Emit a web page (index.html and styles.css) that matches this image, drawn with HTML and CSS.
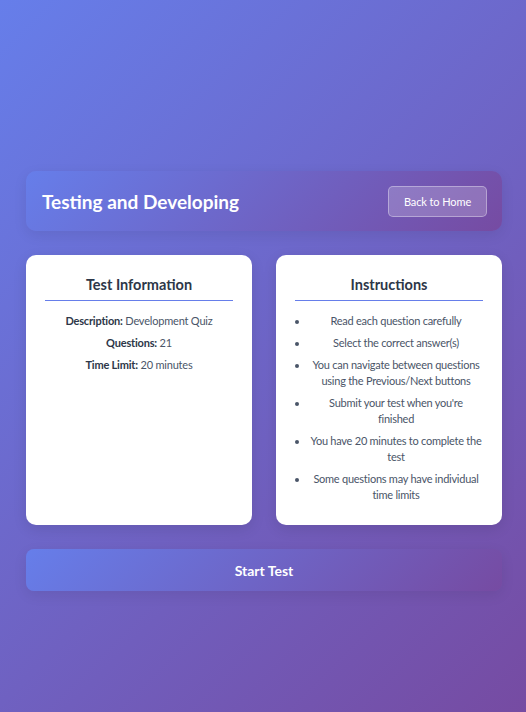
FILE: index.html
```html
<!DOCTYPE html>
<html lang="en">
<head>
<meta charset="utf-8">
<title>Testing and Developing</title>
<link rel="stylesheet" href="styles.css">
</head>
<body>
<main class="page">
  <header class="test-header">
    <h1 class="test-title">Testing and Developing</h1>
    <button class="back-btn" type="button">Back to Home</button>
  </header>
  <section class="cards">
    <div class="card">
      <h2 class="card-title">Test Information</h2>
      <p class="info"><strong>Description:</strong> Development Quiz</p>
      <p class="info"><strong>Questions:</strong> 21</p>
      <p class="info"><strong>Time Limit:</strong> 20 minutes</p>
    </div>
    <div class="card">
      <h2 class="card-title">Instructions</h2>
      <ul class="instructions">
        <li>Read each question carefully</li>
        <li>Select the correct answer(s)</li>
        <li>You can navigate between questions using the Previous/Next buttons</li>
        <li>Submit your test when you're<br>finished</li>
        <li>You have 20 minutes to complete the test</li>
        <li>Some questions may have individual time limits</li>
      </ul>
    </div>
  </section>
  <button class="start-btn" type="button">Start Test</button>
</main>
</body>
</html>
```
FILE: styles.css
```css
* { box-sizing: border-box; }
html, body { margin: 0; height: 100%; }
body {
  font-family: Lato, "Noto Sans", sans-serif;
  background: linear-gradient(135deg, #667eea 0%, #764ba2 100%);
  min-height: 712px;
  color: #333;
}
.page {
  padding: 171px 24px 0 26px;
  display: flex;
  flex-direction: column;
  gap: 24px;
}
.test-header {
  height: 60px;
  display: flex;
  align-items: center;
  justify-content: space-between;
  padding: 0 15px 0 16px;
  border-radius: 10px;
  background: linear-gradient(135deg, #667eea 0%, #764ba2 100%);
  box-shadow: 0 4px 14px rgba(0,0,0,0.08);
}
.test-title {
  margin: 0;
  font-size: 19px;
  font-weight: 700;
  color: #fff;
}
.back-btn {
  height: 31px;
  width: 99px;
  border: 1px solid rgba(255,255,255,0.35);
  border-radius: 5px;
  background: rgba(255,255,255,0.2);
  color: #fff;
  font-family: inherit;
  font-size: 11px;
  letter-spacing: -0.1px;
  padding: 0;
}
.cards {
  display: grid;
  grid-template-columns: 1fr 1fr;
  gap: 24px;
}
.card {
  background: #fff;
  border-radius: 10px;
  padding: 20px 19px 21px;
  min-height: 270px;
  box-shadow: 0 4px 14px rgba(0,0,0,0.1);
  text-align: center;
}
.card-title {
  margin: 0 0 12px;
  font-size: 14.5px;
  font-weight: 700;
  line-height: 20px;
  padding-bottom: 5px;
  border-bottom: 1px solid #667eea;
  color: #2d3748;
}
.info {
  margin: 0 0 6px;
  font-size: 11px;
  letter-spacing: -0.2px;
  line-height: 16px;
  color: #4a5568;
}
.info strong { color: #2d3748; }
.instructions {
  margin: 0;
  padding-left: 14px;
  font-size: 11px;
  letter-spacing: -0.25px;
  line-height: 16px;
  color: #4a5568;
}
.instructions li { margin-bottom: 6px; }
.instructions li:last-child { margin-bottom: 0; }
.start-btn {
  height: 42px;
  border: 0;
  border-radius: 8px;
  background: linear-gradient(135deg, #667eea 0%, #764ba2 100%);
  color: #fff;
  font-family: inherit;
  font-size: 14px;
  font-weight: 700;
  box-shadow: 0 4px 14px rgba(0,0,0,0.08);
}
```
